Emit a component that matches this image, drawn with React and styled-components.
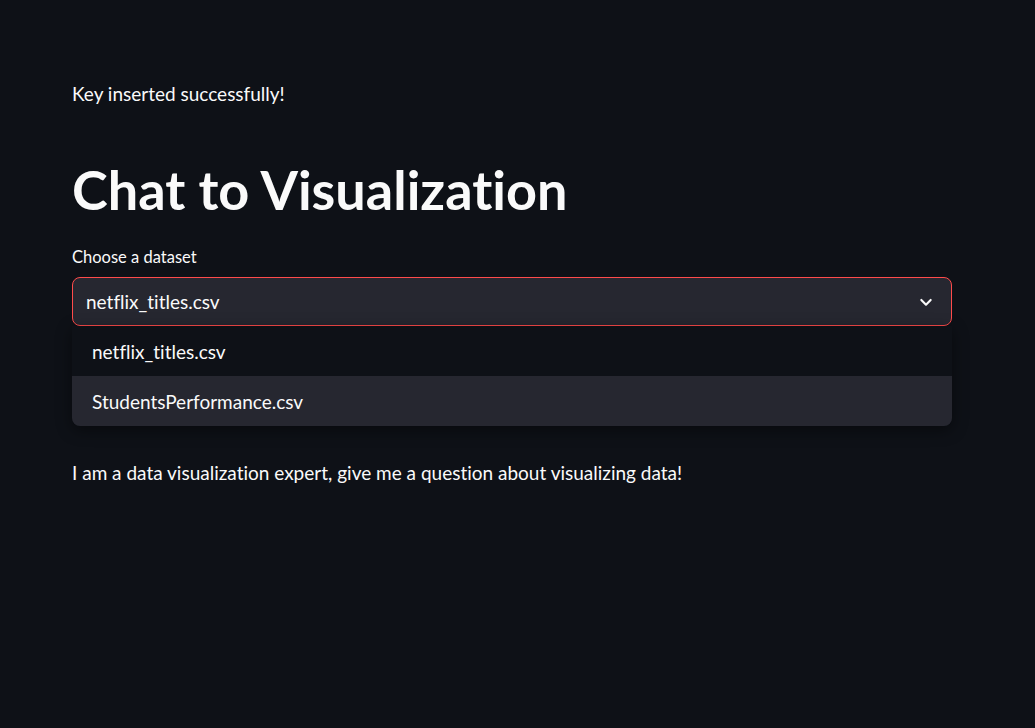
import React, { useState } from "react";
import styled, { createGlobalStyle } from "styled-components";

const GlobalStyle = createGlobalStyle`
  html, body {
    margin: 0;
    padding: 0;
    background: #0e1117;
  }
  body {
    font-family: "Lato", "Noto Sans", sans-serif;
    font-variant-ligatures: none;
    color: #fafafa;
  }
`;

const Page = styled.div`
  min-height: 728px;
  background: #0e1117;
  padding: 80px 83px 0 72px;
  box-sizing: border-box;
`;

const Main = styled.div`
  width: 880px;
  display: flex;
  flex-direction: column;
`;

const Text = styled.p`
  margin: 0;
  font-size: 19px;
  line-height: 28px;
  color: #fafafa;
`;

const Title = styled.h1`
  margin: 49px 0 0;
  font-size: 54px;
  font-weight: 700;
  line-height: 66px;
  color: #fafafa;
`;

const Label = styled.label`
  margin-top: 23px;
  font-size: 16.5px;
  line-height: 22px;
  color: #fafafa;
`;

const SelectWrap = styled.div`
  position: relative;
  margin-top: 9px;
`;

const SelectBox = styled.div`
  height: 49px;
  box-sizing: border-box;
  border: 1px solid #ff4b4b;
  border-radius: 8px;
  background: #262730;
  display: flex;
  align-items: center;
  justify-content: space-between;
  padding: 0 17px 0 13px;
  font-size: 19px;
`;

const Menu = styled.ul`
  position: absolute;
  left: 0;
  right: 0;
  top: 49px;
  margin: 0;
  padding: 0;
  list-style: none;
  background: #0e1117;
  border-radius: 0 0 8px 8px;
  overflow: hidden;
  box-shadow: 0 4px 16px rgba(0, 0, 0, 0.45);
`;

const Option = styled.li`
  height: 50px;
  display: flex;
  align-items: center;
  padding-left: 20px;
  font-size: 19px;
  background: ${(p) => (p.$active ? "#262730" : "transparent")};
`;

const Spacer = styled.div`
  height: 133px;
`;

const Chevron = () => (
  <svg width="16" height="16" viewBox="0 0 24 24" fill="none">
    <path
      d="M5 9l7 7 7-7"
      stroke="#fafafa"
      strokeWidth="3.2"
      strokeLinecap="round"
      strokeLinejoin="round"
    />
  </svg>
);

const options = ["netflix_titles.csv", "StudentsPerformance.csv"];

export default function App() {
  const [active] = useState(1);
  return (
    <>
      <GlobalStyle />
      <Page>
        <Main>
          <Text>Key inserted successfully!</Text>
          <Title>Chat to Visualization</Title>
          <Label>Choose a dataset</Label>
          <SelectWrap>
            <SelectBox>
              <span>netflix_titles.csv</span>
              <Chevron />
            </SelectBox>
            <Menu>
              {options.map((o, i) => (
                <Option key={o} $active={i === active}>
                  {o}
                </Option>
              ))}
            </Menu>
          </SelectWrap>
          <Spacer />
          <Text>
            I am a data visualization expert, give me a question about
            visualizing data!
          </Text>
        </Main>
      </Page>
    </>
  );
}
